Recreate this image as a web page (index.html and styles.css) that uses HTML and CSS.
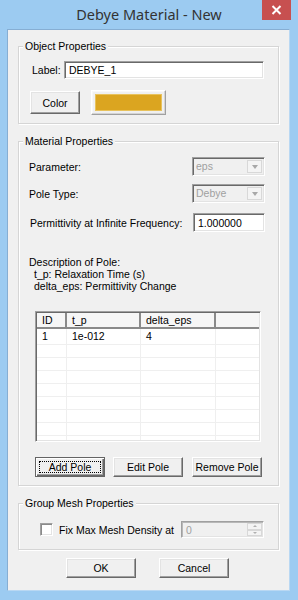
FILE: index.html
```html
<!DOCTYPE html>
<html>
<head>
<meta charset="utf-8">
<link rel="stylesheet" href="styles.css">
</head>
<body>
<div class="window">
  <div class="titlebar">
    <span class="tb-spacer"></span>
    <span class="title">Debye Material - New</span>
    <span class="close">
      <svg width="29" height="20" viewBox="0 0 29 20"><path d="M10.5 6 L18.5 14 M18.5 6 L10.5 14" stroke="#fff" stroke-width="2" fill="none"/></svg>
    </span>
  </div>
  <div class="client">
    <div class="group g-object">
      <div class="legend">Object Properties</div>
      <div class="row r-label">
        <span>Label:</span>
        <div class="input label-input">DEBYE_1</div>
      </div>
      <div class="row r-color">
        <div class="btn btn-color">Color</div>
        <div class="swatch"><div class="swatch-fill"></div></div>
      </div>
    </div>

    <div class="group g-material">
      <div class="legend">Material Properties</div>
      <div class="row r-param">
        <span>Parameter:</span>
        <div class="combo"><span class="combo-text">eps</span><span class="combo-btn"><span class="tri"></span></span></div>
      </div>
      <div class="row r-pole">
        <span>Pole Type:</span>
        <div class="combo"><span class="combo-text">Debye</span><span class="combo-btn"><span class="tri"></span></span></div>
      </div>
      <div class="row r-perm">
        <span>Permittivity at Infinite Frequency:</span>
        <div class="input perm-input">1.000000</div>
      </div>
      <div class="desc">
        <div>Description of Pole:</div>
        <div class="sub">t_p: Relaxation Time (s)</div>
        <div class="sub">delta_eps: Permittivity Change</div>
      </div>
      <div class="table">
        <div class="thead">
          <div class="th">ID</div>
          <div class="th">t_p</div>
          <div class="th">delta_eps</div>
          <div class="th"></div>
        </div>
        <div class="tbody">
          <div class="tr first"><div class="td">1</div><div class="td">1e-012</div><div class="td">4</div><div class="td"></div></div>
          <div class="tr"><div class="td"></div><div class="td"></div><div class="td"></div><div class="td"></div></div>
          <div class="tr"><div class="td"></div><div class="td"></div><div class="td"></div><div class="td"></div></div>
          <div class="tr"><div class="td"></div><div class="td"></div><div class="td"></div><div class="td"></div></div>
          <div class="tr"><div class="td"></div><div class="td"></div><div class="td"></div><div class="td"></div></div>
          <div class="tr"><div class="td"></div><div class="td"></div><div class="td"></div><div class="td"></div></div>
          <div class="tr"><div class="td"></div><div class="td"></div><div class="td"></div><div class="td"></div></div>
          <div class="tr"><div class="td"></div><div class="td"></div><div class="td"></div><div class="td"></div></div>
          <div class="tr"><div class="td"></div><div class="td"></div><div class="td"></div><div class="td"></div></div>
        </div>
      </div>
      <div class="row r-polebtns">
        <div class="btn btn-default"><span class="focus">Add Pole</span></div>
        <div class="btn">Edit Pole</div>
        <div class="btn">Remove Pole</div>
      </div>
    </div>

    <div class="group g-mesh">
      <div class="legend">Group Mesh Properties</div>
      <div class="row r-mesh">
        <span class="checkbox"></span>
        <span class="mesh-label">Fix Max Mesh Density at</span>
        <div class="spin">
          <span class="spin-text">0</span>
          <span class="spin-btns">
            <span class="spin-btn"><span class="tri-up"></span></span>
            <span class="spin-btn"><span class="tri-down"></span></span>
          </span>
        </div>
      </div>
    </div>

    <div class="row r-dialog">
      <div class="btn">OK</div>
      <div class="btn">Cancel</div>
    </div>
  </div>
</div>
</body>
</html>
```

FILE: styles.css
```css
* { box-sizing: border-box; }
html, body { margin: 0; padding: 0; }
body {
  width: 298px;
  height: 600px;
  overflow: hidden;
  font-family: "Liberation Sans", Arial, sans-serif;
  font-size: 10.5px;
  color: #000;
  white-space: nowrap;
}
.window {
  width: 298px;
  height: 600px;
  background: #9ccbf1;
  padding: 0 8px 9px 7px;
  display: flex;
  flex-direction: column;
}
.titlebar {
  height: 29px;
  display: grid;
  grid-template-columns: 1fr auto 1fr;
  align-items: start;
  margin: 0 -8px 0 -7px;
}
.title {
  font-family: "Noto Sans", "Open Sans", sans-serif;
  font-size: 14.5px;
  color: #333;
  line-height: 29px;
}
.close {
  justify-self: end;
  margin-right: 7px;
  width: 29px;
  height: 20px;
  background: #c75050;
  display: flex;
}
.client {
  flex: 1;
  background: #f0f0f0;
  border: 1px solid #86aed3;
  border-right-color: #b9d8f3;
  border-bottom-color: #b9d8f3;
  padding: 16px 10px 0 10px;
  display: flex;
  flex-direction: column;
}
.group {
  border: 1px solid #d5d5d5;
  box-shadow: 1px 1px 0 #fff, inset 1px 1px 0 #fff;
  display: flex;
  flex-direction: column;
}
.legend {
  margin: -8px 0 0 4px;
  padding: 0 2px;
  background: #f0f0f0;
  width: max-content;
  height: 14px;
  line-height: 14px;
}
.row {
  display: flex;
  align-items: center;
}
.input {
  background: #fff;
  border: 1px solid;
  border-color: #a0a0a0 #fff #fff #a0a0a0;
  box-shadow: inset 1px 1px 0 #696969, inset -1px -1px 0 #e3e3e3;
  padding: 0 4px;
  line-height: 17px;
}
.btn {
  border: 1px solid;
  border-color: #fff #696969 #696969 #fff;
  box-shadow: inset -1px -1px 0 #a0a0a0, inset 1px 1px 0 #e3e3e3;
  background: #f0f0f0;
  display: flex;
  align-items: center;
  justify-content: center;
  width: 70px;
  height: 20px;
}

/* Object group */
.g-object { height: 78px; }
.r-label { margin-top: 8px; padding: 0 14px 0 13px; }
.label-input { margin-left: auto; width: 200px; height: 18px; }
.r-color { margin-top: 11px; padding-left: 11px; }
.btn-color { width: 50px; height: 23px; }
.swatch {
  margin-left: 11px;
  width: 75px;
  height: 25px;
  border: 1px solid;
  border-color: #fff #a0a0a0 #a0a0a0 #fff;
  box-shadow: inset -1px -1px 0 #d4d4d4, inset 1px 1px 0 #f8f8f8;
  padding: 3px;
}
.swatch-fill {
  width: 100%;
  height: 100%;
  background: #dba520;
  border: 1px solid #e8c25c;
}

/* Material group */
.g-material { margin-top: 17px; height: 345px; }
.r-param { margin-top: 9px; padding: 0 13px 0 10px; justify-content: space-between; }
.r-pole { margin-top: 8px; padding: 0 13px 0 10px; justify-content: space-between; }
.combo {
  width: 73px;
  height: 19px;
  border: 1px solid;
  border-color: #a0a0a0 #fff #fff #a0a0a0;
  box-shadow: inset 1px 1px 0 #696969, inset -1px -1px 0 #e3e3e3;
  background: #f0f0f0;
  display: flex;
  align-items: stretch;
  padding: 2px 2px 2px 2px;
}
.combo-text {
  flex: 1;
  color: #a0a0a0;
  line-height: 13px;
  padding-left: 1px;
}
.combo-btn {
  width: 15px;
  border: 1px solid #d8d8d8;
  background: #f4f4f4;
  display: flex;
  align-items: center;
  justify-content: center;
}
.tri {
  width: 0; height: 0;
  border-left: 3.5px solid transparent;
  border-right: 3.5px solid transparent;
  border-top: 4px solid #a8a8a8;
}
.r-perm { margin-top: 10px; padding: 0 13px 0 11px; justify-content: space-between; }
.perm-input { width: 72px; height: 19px; line-height: 18px; }
.desc {
  margin-top: 24px;
  padding-left: 10px;
  line-height: 12px;
}
.desc .sub { padding-left: 5px; }

.table {
  margin: 19px 0 0 16px;
  width: 226px;
  height: 131px;
  border: 1px solid;
  border-color: #a0a0a0 #fff #fff #a0a0a0;
  box-shadow: inset 1px 1px 0 #696969, inset -1px -1px 0 #e3e3e3;
  background: #fff;
  padding: 1px 1px 1px 1px;
  overflow: hidden;
}
.thead, .tr {
  display: grid;
  grid-template-columns: 30px 74px 75px 1fr;
}
.thead { height: 16px; }
.th {
  background: #f6f6f6;
  border-right: 2px solid #8a8a8a;
  border-bottom: 2px solid #8a8a8a;
  padding-left: 5px;
  line-height: 14px;
}
.th:last-child { border-right: none; }
.tbody { height: 111px; overflow: hidden; }
.tr { height: 13px; }
.tr.first { height: 16px; }
.td {
  border-right: 1px solid #efefef;
  border-bottom: 1px solid #efefef;
  padding-left: 5px;
  line-height: 15px;
}
.td:last-child { border-right: none; }

.r-polebtns { margin-top: 15px; padding-left: 16px; gap: 8px; }
.r-polebtns .btn:last-child { margin-left: 1px; }
.btn-default {
  border: 1px solid #646464;
  box-shadow: inset 1px 1px 0 #fff, inset -1px -1px 0 #696969, inset -2px -2px 0 #a0a0a0;
  padding: 3px;
}
.focus {
  width: 100%;
  height: 100%;
  border: 1px dotted #000;
  display: flex;
  align-items: center;
  justify-content: center;
  line-height: 12px;
}

/* Mesh group */
.g-mesh { margin-top: 17px; height: 47px; }
.r-mesh { margin-top: 11px; padding-left: 21px; }
.checkbox {
  width: 13px;
  height: 13px;
  background: #fff;
  border: 1px solid;
  border-color: #a0a0a0 #fff #fff #a0a0a0;
  box-shadow: inset 1px 1px 0 #8a8a8a, inset -1px -1px 0 #e3e3e3;
}
.mesh-label { margin-left: 6px; font-size: 10.5px; }
.spin {
  margin-left: auto;
  margin-right: 14px;
  width: 83px;
  height: 17px;
  border: 1px solid;
  border-color: #a0a0a0 #fff #fff #a0a0a0;
  box-shadow: inset 1px 1px 0 #b8b8b8, inset -1px -1px 0 #e3e3e3;
  background: #f0f0f0;
  display: flex;
  padding: 1px;
}
.spin-text {
  flex: 1;
  color: #a0a0a0;
  padding-left: 3px;
  line-height: 14px;
}
.spin-btns {
  width: 15px;
  display: flex;
  flex-direction: column;
}
.spin-btn {
  flex: 1;
  border: 1px solid #d8d8d8;
  background: #f4f4f4;
  display: flex;
  align-items: center;
  justify-content: center;
}
.tri-up, .tri-down {
  width: 0; height: 0;
  border-left: 2.5px solid transparent;
  border-right: 2.5px solid transparent;
}
.tri-up { border-bottom: 2px solid #b0b0b0; }
.tri-down { border-top: 2px solid #b0b0b0; }

.r-dialog { margin-top: 8px; padding-left: 48px; gap: 23px; }
```
